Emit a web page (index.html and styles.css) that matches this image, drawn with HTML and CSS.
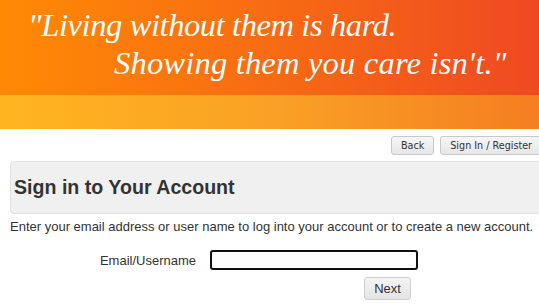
FILE: index.html
```html
<!DOCTYPE html>
<html>
<head>
<meta charset="utf-8">
<link rel="stylesheet" href="styles.css">
</head>
<body>
<div class="page">
  <header class="banner">
    <div class="banner-top">
      <p class="quote q1">"Living without them is hard.</p>
      <p class="quote q2">Showing them you care isn't."</p>
    </div>
    <div class="banner-band"></div>
  </header>
  <nav class="toolbar">
    <button class="btn">Back</button>
    <button class="btn">Sign In / Register</button>
  </nav>
  <section class="panel">
    <h1 class="panel-title">Sign in to Your Account</h1>
  </section>
  <p class="intro">Enter your email address or user name to log into your account or to create a new account.</p>
  <form class="login">
    <div class="row">
      <label class="label" for="user">Email/Username</label>
      <input class="field" id="user" type="text">
    </div>
    <div class="row actions">
      <button type="button" class="next">Next</button>
    </div>
  </form>
</div>
</body>
</html>
```
FILE: styles.css
```css
html, body {
  margin: 0;
  padding: 0;
  overflow: hidden;
  background: #fff;
}
.page {
  width: 560px;
  font-family: "Liberation Sans", Arial, sans-serif;
  color: #333;
}
.banner-top {
  height: 95px;
  background: linear-gradient(to right, #ff8a05 0%, #f76a14 50%, #ee4623 100%);
  box-sizing: border-box;
  padding-top: 6px;
}
.quote {
  margin: 0;
  font-family: "Liberation Serif", "Times New Roman", serif;
  font-style: italic;
  font-size: 32.5px;
  line-height: 38px;
  color: #fff;
  white-space: nowrap;
}
.q1 { padding-left: 28px; letter-spacing: -0.4px; }
.q2 { padding-left: 114px; letter-spacing: 0.2px; }
.banner-band {
  height: 34px;
  background: linear-gradient(to right, #ffb520 0%, #faa025 50%, #f47b20 100%);
}
.toolbar {
  display: flex;
  justify-content: flex-end;
  gap: 6px;
  padding-top: 7px;
  width: 539px;
  box-sizing: border-box;
}
.btn {
  font-family: "DejaVu Sans", Verdana, sans-serif;
  font-size: 9.6px;
  color: #333;
  height: 19px;
  padding: 0 9px;
  border: 1px solid #c8c8c8;
  border-radius: 3px;
  background: linear-gradient(#f6f6f6, #e6e6e6);
}
.toolbar .btn:last-child { margin-right: -6px; padding-right: 12px; }
.panel {
  margin: 6px 0 0 10px;
  height: 51px;
  background: #f0f0f0;
  border: 1px solid #e2e2e2;
  border-radius: 4px;
  display: flex;
  align-items: center;
}
.panel-title {
  margin: 0 0 0 3px;
  font-size: 19.6px;
  font-weight: bold;
  color: #333;
}
.intro {
  margin: 5px 0 0 10px;
  font-size: 13px;
  line-height: 15px;
  color: #333;
}
.login {
  margin-top: 16px;
}
.row {
  display: flex;
  align-items: center;
}
.label {
  width: 196px;
  text-align: right;
  font-size: 13px;
  color: #333;
}
.field {
  margin-left: 14px;
  width: 208px;
  height: 20px;
  box-sizing: border-box;
  border: 2px solid #111;
  border-radius: 3px;
  padding: 0 4px;
}
.actions {
  padding-left: 364px;
  margin-top: 7px;
}
.next {
  font-family: "Liberation Sans", Arial, sans-serif;
  font-size: 13px;
  color: #333;
  width: 47px;
  height: 23px;
  border: 1px solid #cfcfcf;
  border-radius: 3px;
  background: linear-gradient(#f4f4f4, #e4e4e4);
}
```
